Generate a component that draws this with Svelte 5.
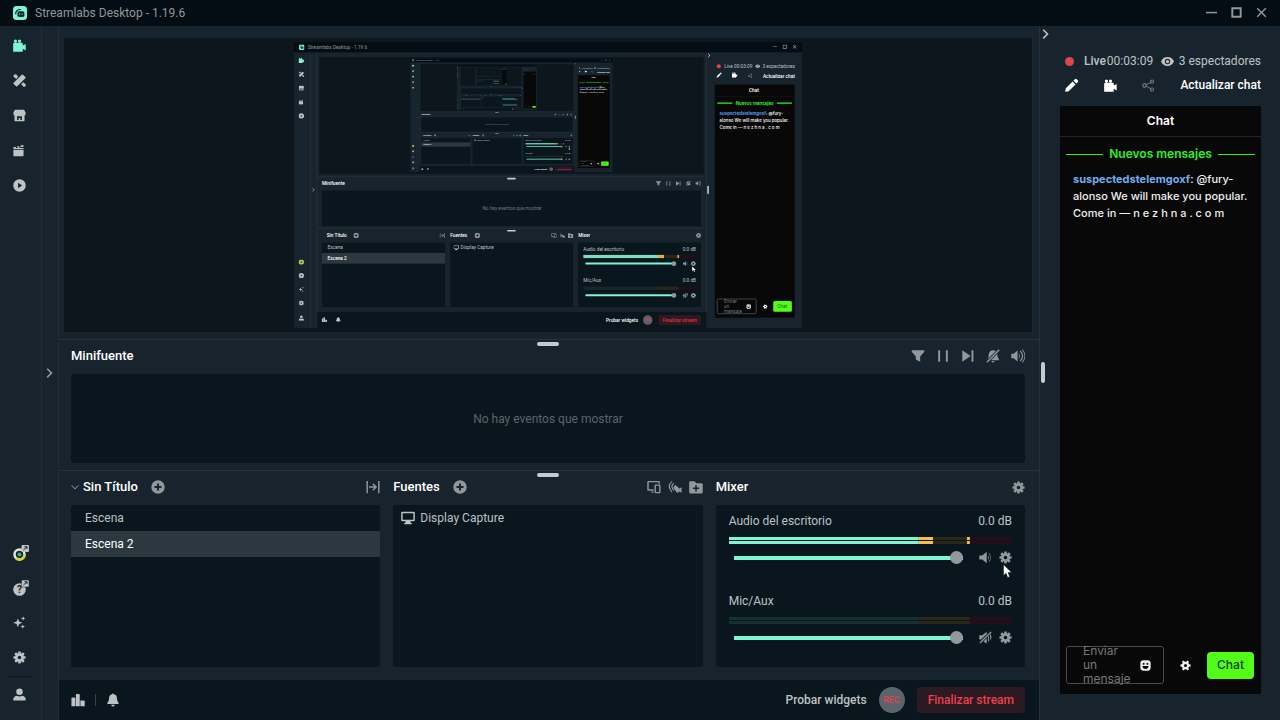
<script>
  // --- Icons, all drawn on a 16x16 grid ---
  function gearPath(teeth) {
    const points = [];
    for (let i = 0; i < teeth; i++) {
      const mid = (i / teeth) * Math.PI * 2;
      for (const [offset, radius] of [[-0.3, 5.6], [-0.2, 7.6], [0.2, 7.6], [0.3, 5.6]]) {
        const angle = mid + offset;
        points.push(`${(8 + radius * Math.cos(angle)).toFixed(2)} ${(8 + radius * Math.sin(angle)).toFixed(2)}`);
      }
    }
    return `M${points.join('L')}zM8 5.8a2.2 2.2 0 1 0 0 4.4a2.2 2.2 0 1 0 0-4.4z`;
  }

  const icons = {
    camera: 'M3 0.5a2 2 0 1 1 0 4a2 2 0 1 1 0-4zM8 0.5a2 2 0 1 1 0 4a2 2 0 1 1 0-4zM1.5 4.500H11q1 0 1 1v2.500L15.6 6v8L12 12V15q0 .8-1 .8H1Q0.2 15.800 0.200 15V6Q0.200 4.500 1.500 4.500z',
    tools: 'M10.800 .8q.7-.6 1.400 0l3 3q.6.7 0 1.400L5.200 15.200q-.7.6-1.400 0l-3-3q-.6-.7 0-1.400zM.8 3.500A2.300 2.300 0 0 1 4.500.9L6.300 3.500 4 6zM12.500 10l2.600 2.200a2 2 0 0 1-2.800 2.900L10 12.500z',
    store: 'M3 1h10q.8 0 1.200.8L15.700 5q.2 2.200-1.500 3v6q0 1.200-1.200 1.200H3Q1.800 15.200 1.800 14V8Q.1 7.200.3 5l1.500-3.200Q2.200 1 3 1zM5 9v4.500h2V11h2v2.500h2V9z',
    clapper: 'M.5 7.500H13V14q0 1-1 1H1.500q-1 0-1-1zM.5 6.500V4.800q.1-.8.900-1l1.600-.4 1.200 1.800 1.700-.5-1-1.700 2-.5 1.200 1.700 1.600-.4-1-1.700L12 1.200q.8 0 1 .7l.2 1.200L6.500 5H13v1.500z',
    play: 'M8 .3a7.700 7.700 0 1 0 0 15.400A7.700 7.700 0 1 0 8 .3zM6.300 4.700L11.300 8l-5 3.300z',
    sparkles: 'M6 3l1.500 3.800L11.500 8.300 7.500 9.800 6 13.700 4.500 9.800.3 8.300 4.500 6.800zM12.500.5l.8 1.700 1.900.8-1.900.8-.8 1.900-.8-1.900L9.800 3l1.900-.8zM12 10.500l.8 1.700 1.900.8-1.900.8-.8 1.900-.8-1.900L9.300 13l1.900-.8z',
    gear: gearPath(8),
    gear6: gearPath(6),
    user: 'M8 .5a4 4 0 1 1 0 8a4 4 0 1 1 0-8zM4.500 9.500Q8 11.500 11.500 9.500 15.700 10.500 15.700 14.500q0 1-1 1H1.300q-1 0-1-1Q.3 10.500 4.500 9.500z',
    stats: 'M1.500 5H4q1 0 1 1v9H.5V6q0-1 1-1zM6.500 1h2.500q1 0 1 1.200V15H5.600V2Q5.600 1 6.500 1zM10.700 8.500h3.800q1.200 0 1.200 1.200V15h-5z',
    bell: 'M8 .5q1 0 1 1 3.500.7 3.500 4.500 0 3.500 2 5.200.5 1.300-.8 1.300H2.300q-1.300 0-.8-1.300 2-1.700 2-5.200Q3.500 2.200 7 1.500 7 .5 8 .5zM6 13.300h4Q9.800 15.500 8 15.500T6 13.300z',
    filter: 'M1.500 1.500h13q1.300.5.700 1.500L10.500 8.500v6L5.500 12V8.500L.8 3Q.2 2 1.500 1.500z',
    pause: 'M2.500 1.500h2.200v13H2.500zM11.300 1.500h2.200v13h-2.200z',
    next: 'M1.500 1.500L11 8l-9.500 6.500zM12 1.500h2.200v13H12z',
    bellOff: 'M14.500.3l1.200 1.200L1.700 15.700.5 14.500zM3 7Q3.500 1.500 8 1.500q2 0 3.200 1.100L1.500 12Q3 10 3 7zM13 5.500Q12.700 9 14.700 11.500v1.300H5.700zM6.300 13.600h3.400q-.4 1.800-1.700 1.800t-1.700-1.800z',
    volume: 'M.3 5.500H3L7.500 1.800v12.400L3 10.500H.3zM9 5q2.600 3 0 6V9.500Q9.900 8 9 6.500zM10 2.600q5 5.400 0 10.800l1 .9q6-6.300 0-12.600zM12.500.8q6 7.200 0 14.400l.7.5q6.500-7.700 0-15.400z',
    speaker: 'M1.200 5.500H4L9.500 1v14L4 10.500H1.200Q.3 10.500.3 9.500v-3q0-1 .9-1zM11 5q2 3 0 6zM12.200 2.300q4.800 5.700 0 11.400v-1.500q3.500-4.200 0-8.400z',
    speakerOff: 'M14.300.5l1.200 1.200L1.700 15.500.5 14.300zM.3 6q0-.8.9-.8H4L9.500 1v2.700L2.700 10.500H1.200Q.3 10.500.3 9.500zM9.500 9v6.300L5.500 13zM11 7.500l1.300-1.300v6.500q-.8.7-1.300 0zM13.500 5l1-1q1.800 4-.5 8z',
    plus: 'M8 .3a7.700 7.700 0 1 0 0 15.400A7.700 7.700 0 1 0 8 .3zM6.900 4h2.200v2.900H12v2.200H9.100V12H6.900V9.100H4V6.900h2.900z',
    expand: 'M.5 1h1.700v14H.5zM13.800 1h1.700v14h-1.700zM3.500 7.100h6L7.300 5l1.100-1.200L12.700 8l-4.300 4.200L7.300 11l2.200-2.100h-6z',
    monitor: 'M1.500.8h13q1.300 0 1.300 1.200v8.500q0 1.300-1.300 1.300h-4l.8 2h1v1.400H3.700v-1.400h1l.8-2h-4Q.2 11.800.2 10.500V2Q.2.8 1.500.8zM1.900 2.500v7.600h12.200V2.500z',
    screens: 'M1.500 1h12q1.200 0 1.200 1.200v2H13V2.600H2v8h5.500v1.700H1.500Q.3 12.300.3 11V2.200Q.3 1 1.500 1zM5 13h2.500v1.700H5zM9.800 5h4.500q1.200 0 1.200 1.200V14q0 1.200-1.200 1.200H9.800Q8.600 15.200 8.600 14V6.200Q8.600 5 9.800 5zM10.200 6.600v7h3.700v-7z',
    airCam: 'M4.500.8l.5 1q-5.500 5.500 0 11.500l-.8.9q-7-7 .3-13.400zM6.500 3l.5 1q-3.500 3.500 0 7.500l-.7.9Q1.200 7 6.500 3zM8 5.500L12.500 9v1l3-1.800v6.300l-3-1.700v1.500H10L6 9z',
    folder: 'M1.500 1.500h4.800l2 2.200h6q1.400 0 1.400 1.300v9q0 1.300-1.400 1.300H1.500Q.2 15.300.2 14V2.800Q.2 1.500 1.500 1.500zM7.100 6v2.600H4.500v1.800h2.600V13h1.800v-2.600h2.600V8.600H8.900V6z',
    pencil: 'M11.500 1.200q.8-.8 1.600 0l1.700 1.700q.8.8 0 1.600L13 6.300 9.700 3zM8.700 4L12 7.300 4.200 15 .8 15.800Q.2 15.800.2 15.200L1 11.700z',
    share: 'M12.500.7a2.500 2.500 0 1 1-1.900 4.200L5.800 7.500q.1.500 0 1l4.800 2.600A2.500 2.500 0 1 1 10 12L5.300 9.500a2.700 2.700 0 1 1 0-3L10 4A2.500 2.500 0 0 1 12.500.7zM12.500 2a1.200 1.200 0 1 0 0 2.400a1.200 1.200 0 1 0 0-2.400zM3 6.600a1.400 1.400 0 1 0 0 2.800a1.400 1.400 0 1 0 0-2.800zM12.500 11.600a1.200 1.200 0 1 0 0 2.400a1.200 1.200 0 1 0 0-2.400z',
    eye: 'M8 2.500Q13.500 2.500 16 8q-2.500 5.500-8 5.500T0 8Q2.500 2.500 8 2.500zM8 4.700a3.300 3.300 0 1 0 0 6.600a3.300 3.300 0 1 0 0-6.600zM8 6a2 2 0 1 1 0 4a2 2 0 1 1 0-4z',
    smile: 'M5 .5h6Q15.500.5 15.500 5v6q0 4.500-4.500 4.500H5Q.5 15.500.5 11V5Q.5.5 5 .5zM4 4.500v2.300h2.500V4.500zM9.500 4.500v2.300H12V4.500zM3.500 8.700Q4 13 8 13t4.500-4.300z',
    chevronRight: 'M5 1.500L11.500 8 5 14.500 3.500 13 8.500 8l-5-5z',
    chevronDown: 'M1.500 4L8 10.700 14.500 4l1 1.100L8 12.900.5 5.100z',
    minimize: 'M0 7h16v2.200H0z',
    maximize: 'M.5.5h15v15H.5zM3.300 3.300v9.400h9.400V3.300z',
    close: 'M2.500 1L8 6.500 13.500 1 15 2.500 9.500 8l5.500 5.500-1.500 1.500L8 9.500 2.500 15 1 13.500 6.500 8 1 2.500z'
  };

  const navItems = [
    { icon: 'camera', label: 'Editor', active: true },
    { icon: 'tools', label: 'Temas' },
    { icon: 'store', label: 'Tienda' },
    { icon: 'clapper', label: 'Highlighter' },
    { icon: 'play', label: 'Panel' }
  ];

  const feedActions = [
    { icon: 'filter', label: 'Filtrar' },
    { icon: 'pause', label: 'Pausar' },
    { icon: 'next', label: 'Saltar' },
    { icon: 'bellOff', label: 'Silenciar alertas' },
    { icon: 'volume', label: 'Volumen' }
  ];

  const sourceActions = [
    { icon: 'screens', label: 'Modo dual' },
    { icon: 'airCam', label: 'Cámara' },
    { icon: 'folder', label: 'Agregar grupo' }
  ];

  const scenes = ['Escena', 'Escena 2'];
  let activeScene = $state('Escena 2');

  let channels = $state([
    { id: 'desktop', name: 'Audio del escritorio', db: '0.0 dB', volume: 100, level: 72, peak: 84, muted: false },
    { id: 'mic', name: 'Mic/Aux', db: '0.0 dB', volume: 100, level: 0, peak: 0, muted: true }
  ]);

  // meter zones, in percent of the meter width
  const warning = 67;
  const danger = 85;

  let message = $state('');
</script>

{#snippet icon(name, size = 14)}
  <svg class="icon" width={size} height={size} viewBox="0 0 16 16" aria-hidden="true">
    <path fill-rule="evenodd" d={icons[name]} />
  </svg>
{/snippet}

{#snippet logo()}
  <rect width="16" height="16" rx="4" fill="#80f5d2" />
  <path d="M3 9.500Q3 4 9 4" fill="none" stroke="#0c2a2a" stroke-width="1.400" />
  <rect x="5" y="6" width="8" height="6.500" rx="2" fill="#0c2a2a" />
  <path d="M7.500 8.500v1.500M10.500 8.500v1.500" stroke="#80f5d2" stroke-width="1.200" />
{/snippet}

{#snippet glyph(name, cx, cy, size, fill)}
  <svg x={cx - size / 2} y={cy - size / 2} width={size} height={size} viewBox="0 0 16 16">
    <path fill-rule="evenodd" d={icons[name]} {fill} />
  </svg>
{/snippet}

<!-- The captured display: the window seen inside its own preview -->
{#snippet capture(depth)}
  <rect width="1280" height="720" fill="#17242d" />
  <rect width="1280" height="26" fill="#040d14" />
  <path d="M42 26V720M58 26V720M58 339H1039M58 469H1039M1039 26V720" stroke="#24323b" stroke-width="2" />
  <rect x="64" y="38" width="968" height="294" fill="#0d161c" />
  <g fill="#09161d">
    <rect x="71" y="374" width="954" height="89" />
    <rect x="71" y="505" width="310" height="162" />
    <rect x="394" y="505" width="309" height="162" />
    <rect x="716" y="505" width="309" height="162" />
    <rect x="59" y="680" width="980" height="40" />
  </g>
  <rect x="71" y="531" width="310" height="27" fill="#2b383f" />
  <rect x="1060" y="107" width="201" height="587" fill="#080808" />
  <path d="M1060 137H1261" stroke="#222" />
  <path d="M1066 154H1104M1216 154H1254" stroke="#2cf224" stroke-width="3" />
  <g fill="#c3cbd0">
    <rect x="537" y="342" width="22" height="4" rx="2" />
    <rect x="537" y="473" width="22" height="4" rx="2" />
    <rect x="1041" y="362" width="4" height="21" rx="2" />
  </g>

  <svg x="13" y="6" width="14" height="14" viewBox="0 0 16 16">{@render logo()}</svg>
  {#each navItems as item, i}
    {@render glyph(item.icon, 19, 46 + i * 35, 14, item.active ? '#80f5d2' : '#bdc2c4')}
  {/each}
  {@render glyph('play', 19, 554, 14, '#b4c957')}
  {@render glyph('play', 19, 588, 14, '#bdc2c4')}
  {@render glyph('sparkles', 19, 623, 14, '#bdc2c4')}
  {@render glyph('gear', 19, 657, 14, '#bdc2c4')}
  {@render glyph('user', 19, 695, 14, '#bdc2c4')}
  {@render glyph('chevronRight', 50, 372, 12, '#91979a')}
  {@render glyph('chevronRight', 1046, 34, 12, '#bdc2c4')}
  {#each feedActions as action, i}
    {@render glyph(action.icon, 918 + i * 25, 356, 14, '#91979a')}
  {/each}
  {@render glyph('plus', 157, 487, 14, '#91979a')}
  {@render glyph('expand', 374, 487, 14, '#91979a')}
  {@render glyph('plus', 462, 487, 14, '#91979a')}
  {#each sourceActions as action, i}
    {@render glyph(action.icon, 655 + i * 21, 487, 14, '#91979a')}
  {/each}
  {@render glyph('gear', 1019, 487, 14, '#91979a')}
  {@render glyph('monitor', 409, 518, 14, '#bdc2c4')}
  {@render glyph('stats', 77, 699, 14, '#bdc2c4')}
  {@render glyph('bell', 112, 699, 14, '#bdc2c4')}
  {@render glyph('minimize', 1211, 12, 11, '#91979a')}
  {@render glyph('maximize', 1236, 12, 11, '#91979a')}
  {@render glyph('close', 1261, 12, 11, '#91979a')}
  {@render glyph('eye', 1168, 61, 13, '#bdc2c4')}
  {@render glyph('pencil', 1071, 83, 14, '#fff')}
  {@render glyph('camera', 1110, 83, 14, '#fff')}
  {@render glyph('share', 1149, 85, 12, '#91979a')}
  {@render glyph('smile', 1145, 666, 12, '#fff')}
  {@render glyph('gear6', 1187, 666, 12, '#fff')}
  <circle cx="1070" cy="61" r="5" fill="#e0454b" />

  {#each channels as channel, i}
    <g transform="translate(0 {i * 80})">
      <rect x="729" y="536" width="188" height="8" fill={channel.muted ? '#142a29' : '#80dcbd'} />
      <rect x="917" y="536" width="52" height="8" fill="#2b2719" />
      <rect x="969" y="536" width="43" height="8" fill="#260d17" />
      {#if !channel.muted}
        <rect x="917" y="536" width="15" height="8" fill="#e8ad4a" />
        <rect x="966" y="536" width="4" height="8" fill="#e8ad4a" />
      {/if}
      <rect x="734" y="555" width="223" height="5" rx="2" fill="#80f5d2" />
      <circle cx="957" cy="558" r="6" fill="#91979a" />
      {@render glyph(channel.muted ? 'speakerOff' : 'speaker', 986, 558, 14, '#91979a')}
      {@render glyph('gear', 1006, 558, 14, '#91979a')}
    </g>
  {/each}

  <rect x="1066" y="647" width="98" height="37" rx="3" fill="none" stroke="#555" stroke-width="2" />
  <rect x="1207" y="652" width="47" height="27" rx="4" fill="#53fc18" />
  <circle cx="891" cy="700" r="12" fill="#5b646a" />
  <rect x="917" y="687" width="108" height="26" rx="3" fill="#2c1a22" />

  {#if depth < 2}
    <g class="capture-text">
      <text x="35" y="17" fill="#91979a">Streamlabs Desktop - 1.19.6</text>
      <text x="71" y="361" class="strong">Minifuente</text>
      <text x="475" y="423" class="faint">No hay eventos que mostrar</text>
      <text x="83" y="492" class="strong">Sin Título</text>
      <text x="394" y="492" class="strong">Fuentes</text>
      <text x="716" y="492" class="strong">Mixer</text>
      <text x="85" y="522">Escena</text>
      <text x="85" y="549" class="strong">Escena 2</text>
      <text x="420" y="522">Display Capture</text>
      {#each channels as channel, i}
        <text x="729" y={525 + i * 80}>{channel.name}</text>
        <text x="979" y={525 + i * 80}>{channel.db}</text>
      {/each}
      <text x="786" y="704" class="strong">Probar widgets</text>
      <text x="891" y="703" class="rec-label" text-anchor="middle">REC</text>
      <text x="929" y="704" class="red">Finalizar stream</text>
      <text x="1084" y="66">Live 00:03:09</text>
      <text x="1180" y="66">3 espectadores</text>
      <text x="1181" y="90" class="strong">Actualizar chat</text>
      <text x="1146" y="126" class="strong">Chat</text>
      <text x="1160" y="159" class="green" text-anchor="middle">Nuevos mensajes</text>
      <g class="capture-chat">
        <text x="1072" y="185"><tspan class="blue">suspectedstelemgoxf</tspan>: @fury-</text>
        <text x="1072" y="202">alonso We will make you popular.</text>
        <text x="1072" y="218">Come in — n e z h n a . c o m</text>
      </g>
      <text x="1083" y="656" class="faint">Enviar</text>
      <text x="1083" y="670" class="faint">un</text>
      <text x="1083" y="683" class="faint">mensaje</text>
      <text x="1217" y="670" class="dark">Chat</text>
    </g>
    <path d="M1003 565v12l3-3 2 5 2-1-2-4h4z" fill="#fff" />
  {/if}

  {#if depth < 3}
    <svg x="293" y="41" width="510" height="287" viewBox="0 0 1280 720">
      {@render capture(depth + 1)}
    </svg>
  {/if}
{/snippet}

<div class="window">
  <header class="titlebar">
    <svg width="14" height="14" viewBox="0 0 16 16" aria-hidden="true">{@render logo()}</svg>
    <span class="title">Streamlabs Desktop - 1.19.6</span>
    <button aria-label="Minimizar">{@render icon('minimize', 11)}</button>
    <button aria-label="Maximizar">{@render icon('maximize', 11)}</button>
    <button aria-label="Cerrar">{@render icon('close', 11)}</button>
  </header>

  <div class="body">
    <nav class="sidenav">
      {#each navItems as item}
        <button class:active={item.active} aria-label={item.label}>{@render icon(item.icon, 13)}</button>
      {/each}
      <span class="spacer"></span>
      <button aria-label="Primeros pasos">
        <svg width="16" height="16" viewBox="0 0 16 16" aria-hidden="true">
          <circle cx="6.500" cy="9.500" r="5" fill="none" stroke="#dfe6e3" stroke-width="2.500" />
          <path d="M11.500 9.500a5 5 0 0 1-8.500 3.500" fill="none" stroke="#d7d62f" stroke-width="2.500" />
          <circle cx="6.500" cy="9.500" r="2" fill="#35b66c" />
          <rect x="8.500" y="0" width="7.500" height="7" rx="1" fill="#bdc2c4" />
          <path d="M10.500 5l3.500-3.300M11.500 1.700H14V4" fill="none" stroke="#17242d" />
        </svg>
      </button>
      <button aria-label="Ayuda">
        <svg width="16" height="16" viewBox="0 0 16 16" aria-hidden="true">
          <circle cx="6.500" cy="9.500" r="6.300" fill="#bdc2c4" />
          <text class="help-mark" x="6.500" y="13" text-anchor="middle">?</text>
          <rect x="8.500" y="0" width="7.500" height="7" rx="1" fill="#bdc2c4" stroke="#17242d" stroke-width=".5" />
          <path d="M10.500 5l3.500-3.300M11.500 1.700H14V4" fill="none" stroke="#17242d" />
        </svg>
      </button>
      <button aria-label="IA">{@render icon('sparkles', 13)}</button>
      <button aria-label="Ajustes">{@render icon('gear', 13)}</button>
      <hr />
      <button aria-label="Cuenta">{@render icon('user', 13)}</button>
    </nav>

    <button class="strip" aria-label="Abrir panel izquierdo">{@render icon('chevronRight', 12)}</button>

    <main class="studio">
      <div class="preview">
        <svg viewBox="0 0 1280 720" role="img" aria-label="Display Capture">
          {@render capture(0)}
        </svg>
      </div>

      <section class="feed">
        <span class="handle"></span>
        <div class="panel-head">
          <h2>Minifuente</h2>
          <span class="spacer"></span>
          <div class="feed-actions">
            {#each feedActions as action}
              <button aria-label={action.label}>{@render icon(action.icon)}</button>
            {/each}
          </div>
        </div>
        <div class="panel empty">No hay eventos que mostrar</div>
      </section>

      <section class="editor">
        <span class="handle"></span>

        <div class="column">
          <div class="panel-head">
            <button class="collection">{@render icon('chevronDown', 8)}<h2>Sin Título</h2></button>
            <button class="add" aria-label="Agregar escena">{@render icon('plus')}</button>
            <span class="spacer"></span>
            <button aria-label="Transiciones">{@render icon('expand')}</button>
          </div>
          <div class="panel">
            {#each scenes as scene}
              <button class="scene" class:selected={scene === activeScene} onclick={() => (activeScene = scene)}>
                {scene}
              </button>
            {/each}
          </div>
        </div>

        <div class="column">
          <div class="panel-head">
            <h2>Fuentes</h2>
            <button class="add" aria-label="Agregar fuente">{@render icon('plus')}</button>
            <span class="spacer"></span>
            <div class="source-actions">
              {#each sourceActions as action}
                <button aria-label={action.label}>{@render icon(action.icon)}</button>
              {/each}
            </div>
          </div>
          <div class="panel">
            <button class="source">{@render icon('monitor')}Display Capture</button>
          </div>
        </div>

        <div class="column">
          <div class="panel-head">
            <h2>Mixer</h2>
            <span class="spacer"></span>
            <button aria-label="Ajustes de audio">{@render icon('gear', 13)}</button>
          </div>
          <div class="panel mixer">
            {#each channels as channel, i}
              <div class="channel">
                <div class="channel-head">
                  <label for={channel.id}>{channel.name}</label>
                  <span>{channel.db}</span>
                </div>
                <svg class="meter" viewBox="0 0 100 7" preserveAspectRatio="none" aria-hidden="true">
                  {#each [0, 4] as y}
                    <rect x="0" {y} width={warning} height="3" fill="#16312f" />
                    <rect x={warning} {y} width={danger - warning} height="3" fill="#2b2719" />
                    <rect x={danger} {y} width={100 - danger} height="3" fill="#260d17" />
                    {#if !channel.muted}
                      <rect x="0" {y} width={warning} height="3" fill="#80f5d2" />
                      <rect x={warning} {y} width={channel.level - warning} height="3" fill="#f5c04a" />
                      <rect x={channel.peak} {y} width="1" height="3" fill="#f5c04a" />
                    {/if}
                  {/each}
                </svg>
                <div class="channel-controls">
                  <input id={channel.id} type="range" min="0" max="100" bind:value={channel.volume} />
                  <button aria-label="Silenciar" onclick={() => (channel.muted = !channel.muted)}>
                    {@render icon(channel.muted ? 'speakerOff' : 'speaker', 13)}
                  </button>
                  <button aria-label="Ajustes de {channel.name}">{@render icon('gear', 13)}</button>
                </div>
                {#if i === 0}
                  <svg class="cursor" width="9" height="14" viewBox="0 0 9 14" aria-hidden="true">
                    <path d="M.5.5v11l2.500-2.300 1.700 4.300 2-.8L5 8.500h3.500z" fill="#fff" stroke="#10181d" stroke-width=".5" />
                  </svg>
                {/if}
              </div>
            {/each}
          </div>
        </div>
      </section>

      <footer>
        <button aria-label="Rendimiento">{@render icon('stats')}</button>
        <span class="divider"></span>
        <button aria-label="Notificaciones">{@render icon('bell')}</button>
        <span class="spacer"></span>
        <button class="widgets">Probar widgets</button>
        <button class="rec">REC</button>
        <button class="end">Finalizar stream</button>
      </footer>
    </main>

    <aside class="dock">
      <button class="dock-toggle" aria-label="Cerrar panel">{@render icon('chevronRight', 12)}</button>
      <span class="dock-handle"></span>
      <div class="live">
        <span class="dot"></span>
        <strong>Live</strong>
        <span>00:03:09</span>
        <span class="spacer"></span>
        {@render icon('eye', 13)}
        <span class="viewers">3 espectadores</span>
      </div>
      <div class="live-actions">
        <button aria-label="Editar">{@render icon('pencil')}</button>
        <button aria-label="Ver en vivo">{@render icon('camera', 13)}</button>
        <button class="dim" aria-label="Compartir">{@render icon('share', 13)}</button>
        <button class="refresh">Actualizar chat</button>
      </div>

      <div class="chat">
        <h2>Chat</h2>
        <div class="new-messages"><span>Nuevos mensajes</span></div>
        <p><b>suspectedstelemgoxf</b>: @fury-alonso We will make you popular. Come in — n e z h n a . c o m</p>
        <form onsubmit={(e) => e.preventDefault()}>
          <div class="message-box">
            <textarea aria-label="Mensaje" placeholder="Enviar un mensaje" bind:value={message}></textarea>
            <button type="button" aria-label="Emotes">{@render icon('smile', 11)}</button>
          </div>
          <button type="button" aria-label="Ajustes del chat">{@render icon('gear6', 11)}</button>
          <button class="send">Chat</button>
        </form>
      </div>
    </aside>
  </div>
</div>

<style>
  :global(body) {
    margin: 0;
    background: #17242d;
  }

  .window {
    display: flex;
    flex-direction: column;
    height: 100vh;
    min-height: 600px;
    background: #17242d;
    color: #bdc2c4;
    font: 12px/16px Roboto, 'Liberation Sans', sans-serif;
  }

  button {
    display: flex;
    align-items: center;
    justify-content: center;
    padding: 0;
    border: 0;
    background: none;
    color: inherit;
    font: inherit;
    cursor: pointer;
  }

  h2 {
    margin: 0;
    color: #fff;
    font-size: 13px;
    font-weight: 500;
    line-height: 16px;
  }

  .icon {
    display: block;
    flex: none;
    fill: currentColor;
  }

  .spacer {
    flex: 1;
  }

  .titlebar {
    display: flex;
    align-items: center;
    gap: 14px;
    height: 26px;
    padding: 0 13px 1px;
    background: #040d14;
    color: #91979a;
    box-sizing: border-box;
  }

  .title {
    flex: 1;
    margin-left: -6px;
  }

  .body {
    flex: 1;
    display: flex;
    min-height: 0;
  }

  .sidenav {
    display: flex;
    flex-direction: column;
    width: 42px;
    padding: 2px 0 8px;
    border-right: 1px solid #202e37;
    box-sizing: border-box;
  }

  .sidenav button {
    height: 35px;
    padding-left: 13px;
    justify-content: flex-start;
  }

  .sidenav .active {
    color: #80f5d2;
  }

  .sidenav hr {
    width: 25px;
    margin: 1px 0 0 8px;
    border: 0;
    border-top: 1px solid #09161d;
  }

  .help-mark {
    fill: #17242d;
    font-size: 10px;
    font-weight: 700;
  }

  .strip {
    width: 17px;
    border-right: 1px solid #202e37;
    color: #91979a;
  }

  .studio {
    flex: 1;
    display: flex;
    flex-direction: column;
    min-width: 0;
  }

  .preview {
    flex: 1;
    min-height: 0;
    margin: 12px 7px 7px 5px;
    padding: 4px 0;
    background: #0d161c;
    box-sizing: border-box;
  }

  .preview > svg {
    display: block;
    width: 100%;
    height: 100%;
  }

  .capture-text {
    fill: #bdc2c4;
    font-size: 12px;
  }

  .capture-text .strong {
    fill: #fff;
    font-weight: 500;
  }

  .capture-text .faint {
    fill: #70797f;
  }

  .capture-text .dark {
    fill: #15661a;
  }

  .capture-text .red {
    fill: #e02c3c;
    font-weight: 500;
  }

  .capture-text .rec-label {
    fill: #e02c3c;
    font-size: 9px;
  }

  .capture-text .green {
    fill: #2cf224;
    font-weight: 600;
  }

  .capture-chat {
    fill: #fff;
    font-family: Inter, 'Liberation Sans', sans-serif;
    font-size: 11px;
    font-weight: 500;
  }

  .capture-chat .blue {
    fill: #5b9aee;
    font-weight: 700;
  }

  .feed,
  .editor {
    position: relative;
    padding: 0 14px 0 12px;
    border-top: 1px solid #24323b;
  }

  .handle {
    position: absolute;
    top: 2px;
    left: 50%;
    width: 22px;
    height: 4px;
    margin-left: -12px;
    border-radius: 2px;
    background: #c3cbd0;
  }

  .panel-head {
    display: flex;
    align-items: center;
    height: 34px;
    padding-bottom: 2px;
    color: #91979a;
    box-sizing: border-box;
  }

  .feed-actions {
    display: flex;
    gap: 11px;
  }

  .source-actions {
    display: flex;
    gap: 7px;
  }

  .panel {
    border-radius: 3px;
    background: #09161d;
    overflow: hidden;
  }

  .empty {
    display: flex;
    align-items: center;
    justify-content: center;
    height: 89px;
    margin-bottom: 7px;
    color: #5b656b;
  }

  .editor {
    display: grid;
    grid-template-columns: repeat(3, minmax(0, 1fr));
    gap: 13px;
    padding-bottom: 13px;
  }

  .column .panel {
    height: 162px;
  }

  .collection {
    gap: 4px;
  }

  .add {
    margin-left: 13px;
  }

  .scene,
  .source {
    width: 100%;
    height: 26px;
    padding: 0 14px;
    justify-content: flex-start;
  }

  .selected {
    background: #2b383f;
    color: #fff;
  }

  .source {
    gap: 5px;
    padding: 0 8px;
  }

  .mixer {
    padding: 0 13px;
    box-sizing: border-box;
  }

  .channel {
    position: relative;
    height: 80px;
    padding-top: 8px;
    box-sizing: border-box;
  }

  .channel-head {
    display: flex;
    justify-content: space-between;
  }

  .meter {
    display: block;
    width: 100%;
    height: 7px;
    margin: 8px 0 7px;
  }

  .channel-controls {
    display: flex;
    align-items: center;
    gap: 7px;
    padding-left: 5px;
    color: #91979a;
  }

  .channel-controls input {
    flex: 1;
    min-width: 0;
    height: 13px;
    margin: 0 9px 0 0;
    background: linear-gradient(#80f5d2, #80f5d2) center / 100% 4px no-repeat;
    border-radius: 2px;
    appearance: none;
  }

  .channel-controls input::-webkit-slider-thumb {
    width: 13px;
    height: 13px;
    border-radius: 50%;
    background: #91979a;
    appearance: none;
  }

  .cursor {
    position: absolute;
    top: 59px;
    right: 0;
  }

  footer {
    display: flex;
    align-items: center;
    height: 40px;
    padding: 0 14px 0 12px;
    background: #09161d;
    box-sizing: border-box;
  }

  .divider {
    width: 1px;
    height: 12px;
    margin: 0 10px;
    background: #35434b;
  }

  .widgets {
    font-weight: 500;
  }

  .rec {
    width: 26px;
    height: 26px;
    margin: 0 12px;
    border-radius: 50%;
    background: #5b646a;
    color: #e5404d;
    font-size: 9px;
    font-weight: 500;
  }

  .end {
    height: 26px;
    padding: 0 11px;
    border-radius: 3px;
    background: #2c1a22;
    color: #ee3f4c;
    font-weight: 500;
  }

  .dock {
    position: relative;
    display: flex;
    flex-direction: column;
    width: 241px;
    padding: 27px 19px 26px 20px;
    border-left: 1px solid #24323b;
    box-sizing: border-box;
  }

  .dock-toggle {
    position: absolute;
    top: 2px;
    left: 0;
  }

  .dock-handle {
    position: absolute;
    top: 336px;
    left: 1px;
    width: 4px;
    height: 21px;
    border-radius: 2px;
    background: #c3cbd0;
  }

  .live {
    display: flex;
    align-items: center;
    height: 16px;
    padding-left: 5px;
  }

  .dot {
    width: 9px;
    height: 9px;
    margin-right: 10px;
    border-radius: 50%;
    background: #e0454b;
  }

  .live strong {
    margin-right: 1px;
    font-weight: 500;
  }

  .viewers {
    margin-left: 5px;
  }

  .live-actions {
    display: flex;
    align-items: center;
    gap: 25px;
    height: 32px;
    padding-left: 5px;
    margin-bottom: 5px;
    color: #fff;
  }

  .live-actions .dim {
    color: #70797f;
  }

  .refresh {
    margin-left: auto;
    font-weight: 500;
  }

  .chat {
    flex: 1;
    display: flex;
    flex-direction: column;
    background: #080808;
    color: #efeff1;
    font-family: Inter, 'Liberation Sans', sans-serif;
    font-weight: 500;
  }

  .chat h2 {
    height: 30px;
    border-bottom: 1px solid #242424;
    font-size: 12px;
    font-weight: 600;
    line-height: 30px;
    text-align: center;
  }

  .new-messages {
    display: flex;
    align-items: center;
    gap: 6px;
    margin: 9px 6px;
    color: #2cf224;
    font-weight: 600;
  }

  .new-messages::before,
  .new-messages::after {
    content: '';
    flex: 1;
    height: 1px;
    background: #2cf224;
  }

  .chat p {
    flex: 1;
    margin: 0;
    padding: 0 6px 0 13px;
    font-size: 11px;
    line-height: 17px;
  }

  .chat p b {
    color: #72acf0;
    font-weight: 700;
  }

  .chat form {
    display: flex;
    align-items: center;
    justify-content: space-between;
    padding: 0 7px 10px 6px;
  }

  .message-box {
    display: flex;
    align-items: center;
    justify-content: space-between;
    width: 98px;
    height: 38px;
    padding: 0 12px 0 16px;
    border: 1px solid #4a4a4d;
    border-radius: 3px;
    box-sizing: border-box;
  }

  .message-box textarea {
    width: 52px;
    height: 42px;
    padding: 0;
    border: 0;
    background: none;
    color: #efeff1;
    font: 12px/14px Inter, 'Liberation Sans', sans-serif;
    resize: none;
    overflow: hidden;
    outline: none;
  }

  .message-box textarea::placeholder {
    color: #77777a;
  }

  .send {
    height: 27px;
    padding: 0 10px;
    border-radius: 4px;
    background: #53fc18;
    color: #12401a;
  }
</style>
